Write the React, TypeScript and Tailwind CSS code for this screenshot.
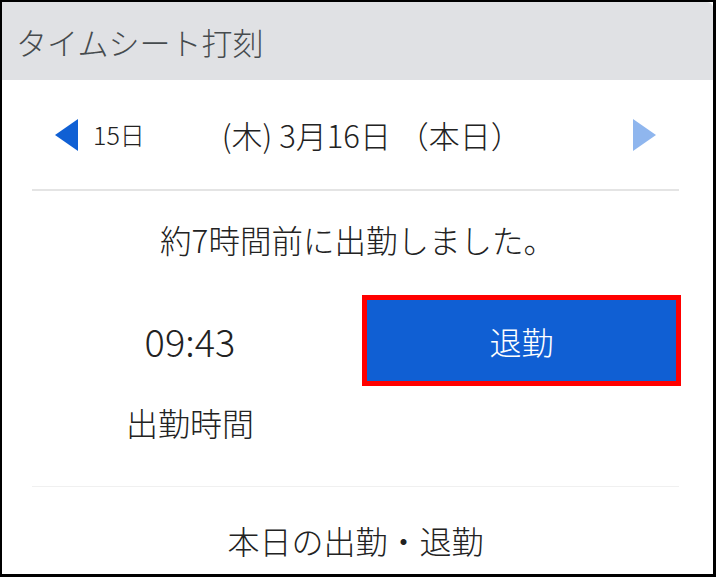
import React from 'react';

const jp = { fontFamily: '"Noto Sans CJK JP", "Noto Sans", sans-serif' };

function Arrow({ dir, color }: { dir: 'left' | 'right'; color: string }) {
  return (
    <svg width="23" height="32" viewBox="0 0 23 32">
      {dir === 'left' ? (
        <polygon points="23,0 23,32 0,16" fill={color} />
      ) : (
        <polygon points="0,0 0,32 23,16" fill={color} />
      )}
    </svg>
  );
}

export default function App() {
  return (
    <div
      className="w-[716px] h-[577px] border-t-2 border-l-2 border-r-[3px] border-b-[3px] border-black bg-white overflow-hidden text-[#222] font-light"
      style={jp}
    >
      <div className="h-[78px] bg-[#e0e1e4] rounded-tr-[6px] flex items-center pl-[14px]">
        <span className="text-[31px] text-[#464b4e] leading-none">タイムシート打刻</span>
      </div>

      <div className="pl-[30px] pr-[34px]">
        {/* date navigation */}
        <div className="h-[111px] flex items-center border-b-2 border-[#e4e4e4] pl-[23px] pr-[23px]">
          <Arrow dir="left" color="#1060d4" />
          <span className="ml-[15px] text-[25px] leading-none">15日</span>
          <span className="ml-[77px] text-[31px] leading-none">(木) 3月16日 （本日）</span>
          <span className="ml-auto">
            <Arrow dir="right" color="#8fb6ee" />
          </span>
        </div>

        <div className="h-[98px] flex items-center justify-center pl-[4px]">
          <span className="text-[31.5px] leading-none">約7時間前に出勤しました。</span>
        </div>

        <div className="flex">
          <div className="w-[316px] shrink-0 flex flex-col items-center">
            <div className="h-[91px] mt-[6px] flex items-center">
              <span className="text-[38px] leading-none">09:43</span>
            </div>
            <div className="mt-[16px] h-[40px] flex items-center">
              <span className="text-[32px] leading-none">出勤時間</span>
            </div>
          </div>
          <div className="ml-[14px] mt-[6px] shrink-0">
            <button className="w-[319px] h-[91px] border-[5px] border-[#ff0000] bg-[#105fd3] text-white text-[32px] font-light leading-none flex items-center justify-center">
              退勤
            </button>
          </div>
        </div>

        <div className="mt-[44px] border-t border-[#f0f0f0] h-[86px] flex items-center justify-center pt-[20px]">
          <span className="text-[32px] leading-none">本日の出勤・退勤</span>
        </div>
      </div>
    </div>
  );
}
